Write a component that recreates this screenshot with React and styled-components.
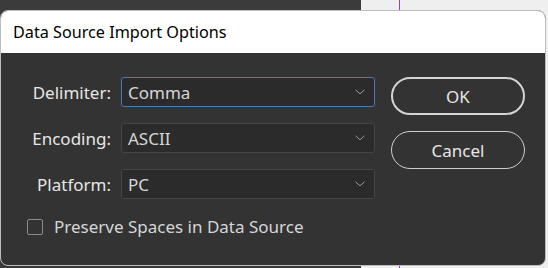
import React, { useState } from 'react';
import styled, { createGlobalStyle } from 'styled-components';

const GlobalStyle = createGlobalStyle`
  html, body {
    margin: 0;
    padding: 0;
    background: #efefef;
  }
  body {
    font-family: "Noto Sans", "Liberation Sans", sans-serif;
  }
`;

const Desktop = styled.div`
  width: 548px;
  height: 268px;
  overflow: hidden;
  padding-top: 10px;
  box-sizing: border-box;
  background: linear-gradient(
    to right,
    #3b3b3b 0 361px,
    #efefef 361px 399px,
    #8b3fd6 399px 400px,
    #efefef 400px
  );
`;

const Dialog = styled.div`
  width: 546px;
  height: 256px;
  box-sizing: border-box;
  border: 1px solid #bdbdbd;
  border-radius: 8px;
  overflow: hidden;
  display: flex;
  flex-direction: column;
  background: #333333;
`;

const TitleBar = styled.div`
  height: 42px;
  flex: none;
  background: #ffffff;
  display: flex;
  align-items: center;
  padding-left: 12px;
  font-size: 16.2px;
  color: #000;
`;

const Body = styled.div`
  flex: 1;
  display: flex;
  flex-direction: column;
  padding-top: 24px;
  gap: 16px;
`;

const Top = styled.div`
  display: flex;
  gap: 16px;
`;

const Form = styled.div`
  display: grid;
  grid-template-columns: 110px 254px;
  column-gap: 10px;
  row-gap: 16px;
  align-items: center;
`;

const Label = styled.label`
  text-align: right;
  font-size: 17px;
  color: #e6e6e6;
`;

const SelectBox = styled.div`
  height: 30px;
  box-sizing: border-box;
  border: 1px solid ${(p) => (p.$focused ? '#4d7bab' : '#464646')};
  border-radius: 3px;
  background: #2b2b2b;
  display: flex;
  align-items: center;
  justify-content: space-between;
  padding: 0 9px 0 6px;
  font-size: 17px;
  color: #d6d6d6;
`;

const Chevron = () => (
  <svg width="10" height="6" viewBox="0 0 10 6">
    <path d="M0.5 0.8 L5 4.8 L9.5 0.8" fill="none" stroke="#9a9a9a" strokeWidth="1" />
  </svg>
);

const Buttons = styled.div`
  display: flex;
  flex-direction: column;
  gap: 16px;
`;

const Button = styled.button`
  width: 134px;
  height: 38px;
  box-sizing: border-box;
  border-radius: 19px;
  border: ${(p) => (p.$primary ? '2px solid #d4d4d4' : '1px solid #cfcfcf')};
  background: transparent;
  color: #e6e6e6;
  font-family: inherit;
  font-size: 17px;
  cursor: pointer;
`;

const CheckRow = styled.label`
  display: flex;
  align-items: center;
  gap: 11px;
  padding-left: 26px;
  font-size: 17px;
  color: #d6d6d6;
  cursor: pointer;
`;

const CheckBox = styled.span`
  width: 16px;
  height: 16px;
  box-sizing: border-box;
  border: 1.5px solid #8a8a8a;
  border-radius: 2px;
  background: ${(p) => (p.$checked ? '#4d7bab' : 'transparent')};
`;

const fields = [
  { label: 'Delimiter:', value: 'Comma', focused: true },
  { label: 'Encoding:', value: 'ASCII' },
  { label: 'Platform:', value: 'PC' },
];

export default function App() {
  const [preserve, setPreserve] = useState(false);

  return (
    <>
      <GlobalStyle />
      <Desktop>
        <Dialog>
          <TitleBar>Data Source Import Options</TitleBar>
          <Body>
            <Top>
              <Form>
                {fields.map((f) => (
                  <React.Fragment key={f.label}>
                    <Label>{f.label}</Label>
                    <SelectBox $focused={f.focused}>
                      {f.value}
                      <Chevron />
                    </SelectBox>
                  </React.Fragment>
                ))}
              </Form>
              <Buttons>
                <Button $primary>OK</Button>
                <Button>Cancel</Button>
              </Buttons>
            </Top>
            <CheckRow onClick={() => setPreserve(!preserve)}>
              <CheckBox $checked={preserve} />
              Preserve Spaces in Data Source
            </CheckRow>
          </Body>
        </Dialog>
      </Desktop>
    </>
  );
}
